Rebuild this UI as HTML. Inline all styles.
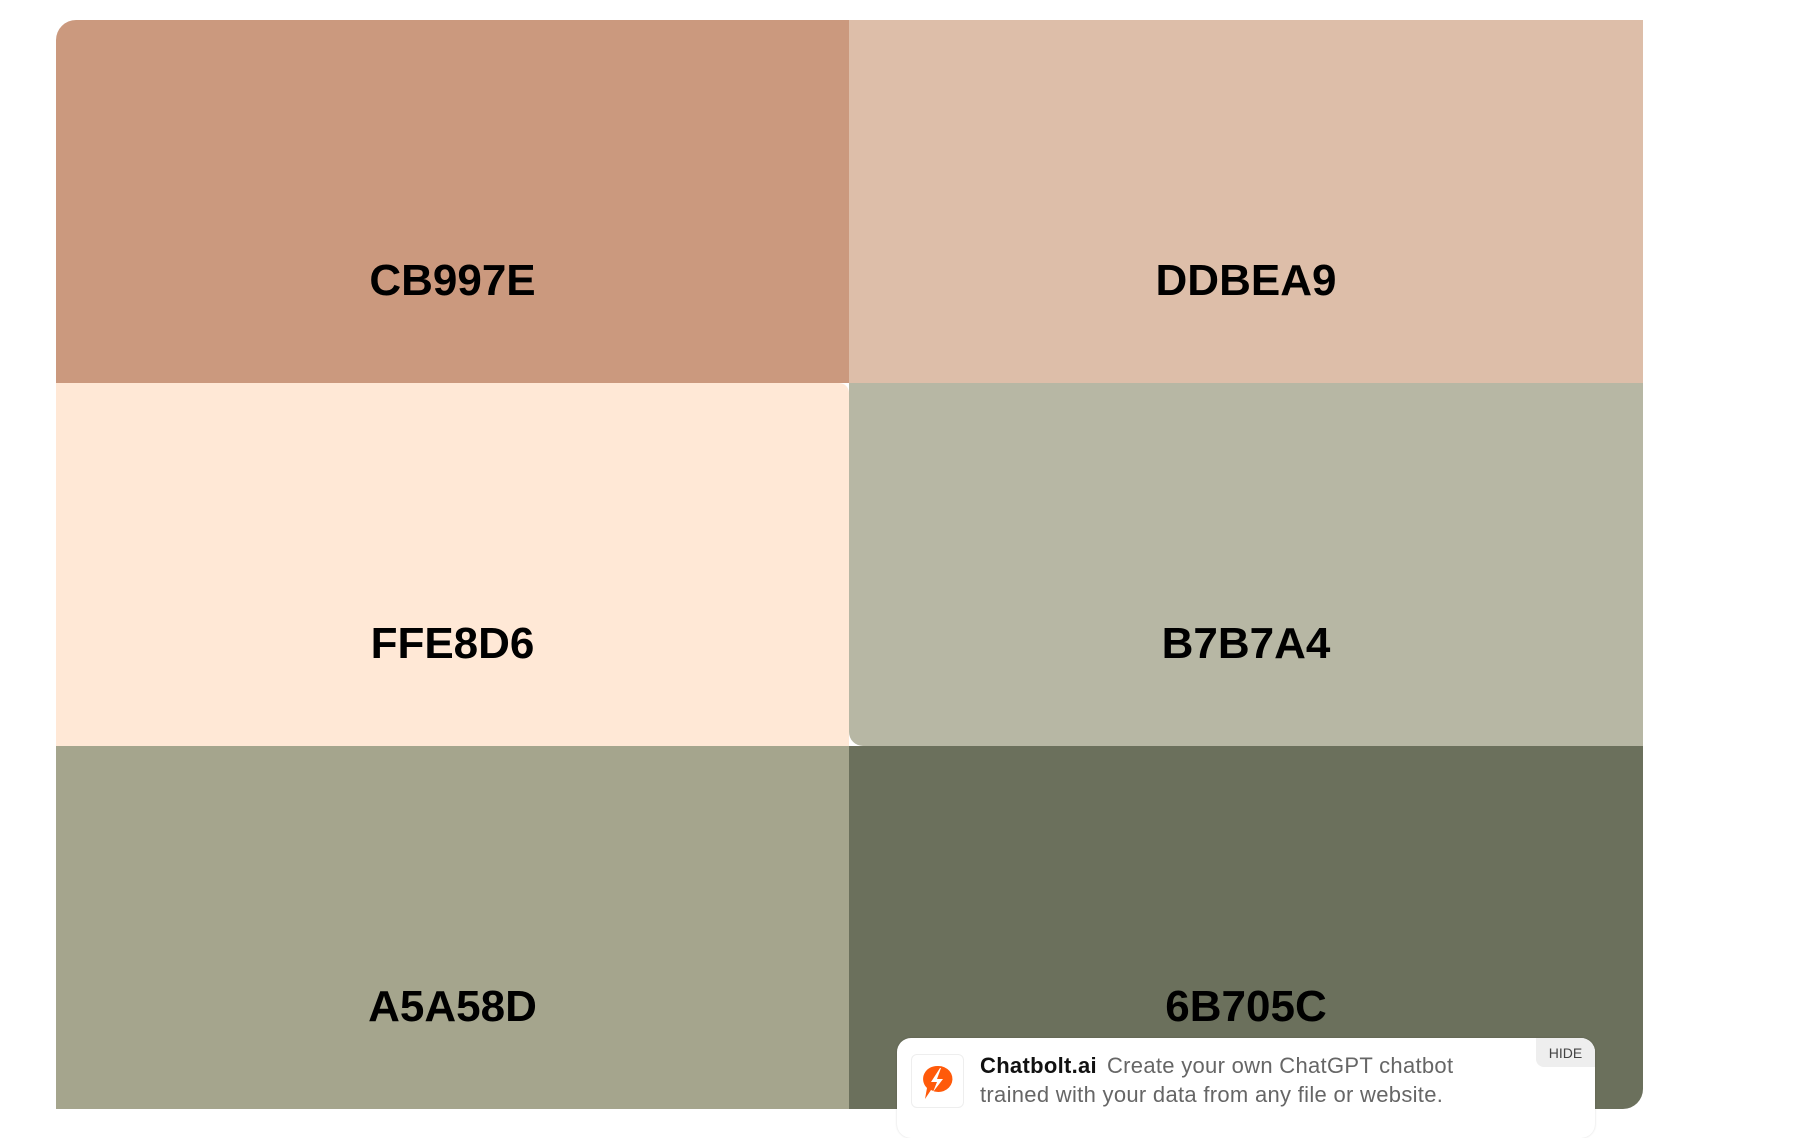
<!DOCTYPE html>
<html><head><meta charset="utf-8"><style>
html,body{margin:0;padding:0;background:#fff;width:1801px;height:1118px;overflow:hidden;font-family:"Liberation Sans",Arial,sans-serif}
.grid{position:absolute;left:56px;top:20px;width:1587px;height:1089px;border-radius:20px 0 20px 0;overflow:hidden}
.c{position:absolute;width:793px;height:363px;font-weight:bold;font-size:44px;color:#000;text-align:center;box-sizing:border-box;padding-top:236px;line-height:50px}
.pop{position:absolute;left:897px;top:1038px;width:698px;height:100px;background:#fff;border-radius:14px;box-shadow:0 0 2px rgba(0,0,0,.15)}
.icon{position:absolute;left:14px;top:16px;width:53px;height:54px;border:1px solid #eee;border-radius:6px;box-sizing:border-box}
.txt{position:absolute;left:83px;top:13px;font-size:22px;letter-spacing:0.3px;line-height:29px;color:#666;width:500px}
.txt b{color:#111;font-weight:600;margin-right:10px}
.hide{position:absolute;right:0;top:0;width:59px;height:29px;background:#eee;border-radius:0 14px 0 8px;font-size:14px;color:#444;display:flex;align-items:center;justify-content:center}
</style></head><body>
<div class="grid">
<div class="c" style="left:0;top:0;background:#CB997E">CB997E</div>
<div class="c" style="left:793px;top:0;width:794px;background:#DDBEA9">DDBEA9</div>
<div class="c" style="left:0;top:363px;background:#FFE8D6;border-top-right-radius:10px">FFE8D6</div>
<div class="c" style="left:793px;top:363px;width:794px;background:#B7B7A4;border-bottom-left-radius:14px">B7B7A4</div>
<div class="c" style="left:0;top:726px;background:#A5A58D">A5A58D</div>
<div class="c" style="left:793px;top:726px;width:794px;background:#6B705C">6B705C</div>
</div>
<div class="pop">
<div class="icon"><svg width="51" height="52" viewBox="0 0 51 52"><path d="M26 11a14 13 0 1 1 -7 24l-6 9 2-11a14 13 0 0 1 11-22z" fill="#FF5A0A"/><path d="M28 13l-9 14h6l-4 10 10-13h-6l4-11z" fill="#fff"/></svg></div>
<div class="txt"><b>Chatbolt.ai</b>Create your own ChatGPT chatbot trained with your data from any file or website.</div>
<div class="hide">HIDE</div>
</div>
</body></html>
